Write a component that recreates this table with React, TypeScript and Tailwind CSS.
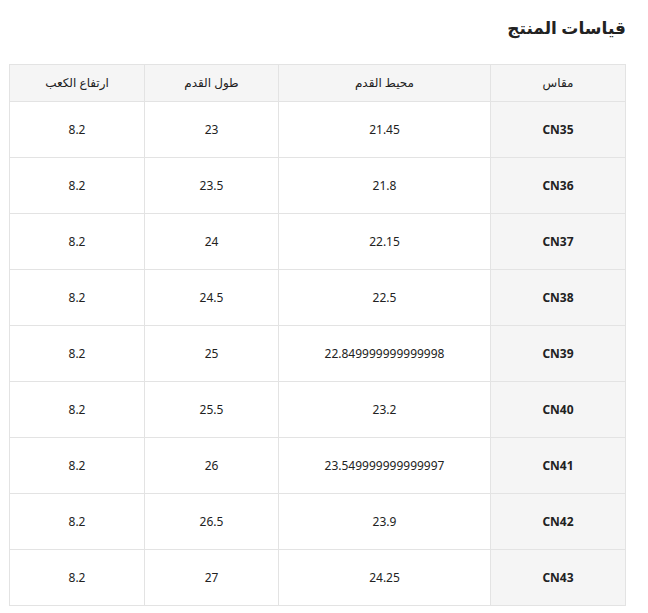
const rows: [string, string, string, string][] = [
  ["CN35", "21.45", "23", "8.2"],
  ["CN36", "21.8", "23.5", "8.2"],
  ["CN37", "22.15", "24", "8.2"],
  ["CN38", "22.5", "24.5", "8.2"],
  ["CN39", "22.849999999999998", "25", "8.2"],
  ["CN40", "23.2", "25.5", "8.2"],
  ["CN41", "23.549999999999997", "26", "8.2"],
  ["CN42", "23.9", "26.5", "8.2"],
  ["CN43", "24.25", "27", "8.2"],
];

const App = () => {
  return (
    <div
      dir="rtl"
      className="bg-white w-[648px] h-[613px] pr-[22px] pl-[10px] pt-[14px] text-[#222]"
      style={{ fontFamily: '"Noto Sans", "DejaVu Sans", sans-serif' }}
    >
      <h2 className="text-[17px] font-semibold leading-[28px] mb-[22px]">قياسات المنتج</h2>
      <table className="w-[616px] border-collapse table-fixed text-[12px] text-center">
        <colgroup>
          <col className="w-[135px]" />
          <col className="w-[212px]" />
          <col className="w-[134px]" />
          <col className="w-[135px]" />
        </colgroup>
        <thead>
          <tr className="bg-[#f5f5f5] h-[37px]">
            <th className="border border-[#e3e3e3] font-medium">مقاس</th>
            <th className="border border-[#e3e3e3] font-medium">محيط القدم</th>
            <th className="border border-[#e3e3e3] font-medium">طول القدم</th>
            <th className="border border-[#e3e3e3] font-medium">ارتفاع الكعب</th>
          </tr>
        </thead>
        <tbody>
          {rows.map((r) => (
            <tr key={r[0]} className="h-[56px]">
              <td className="border border-[#e3e3e3] bg-[#f5f5f5] font-bold">{r[0]}</td>
              <td className="border border-[#e3e3e3]">{r[1]}</td>
              <td className="border border-[#e3e3e3]">{r[2]}</td>
              <td className="border border-[#e3e3e3]">{r[3]}</td>
            </tr>
          ))}
        </tbody>
      </table>
    </div>
  );
};

export default App;
